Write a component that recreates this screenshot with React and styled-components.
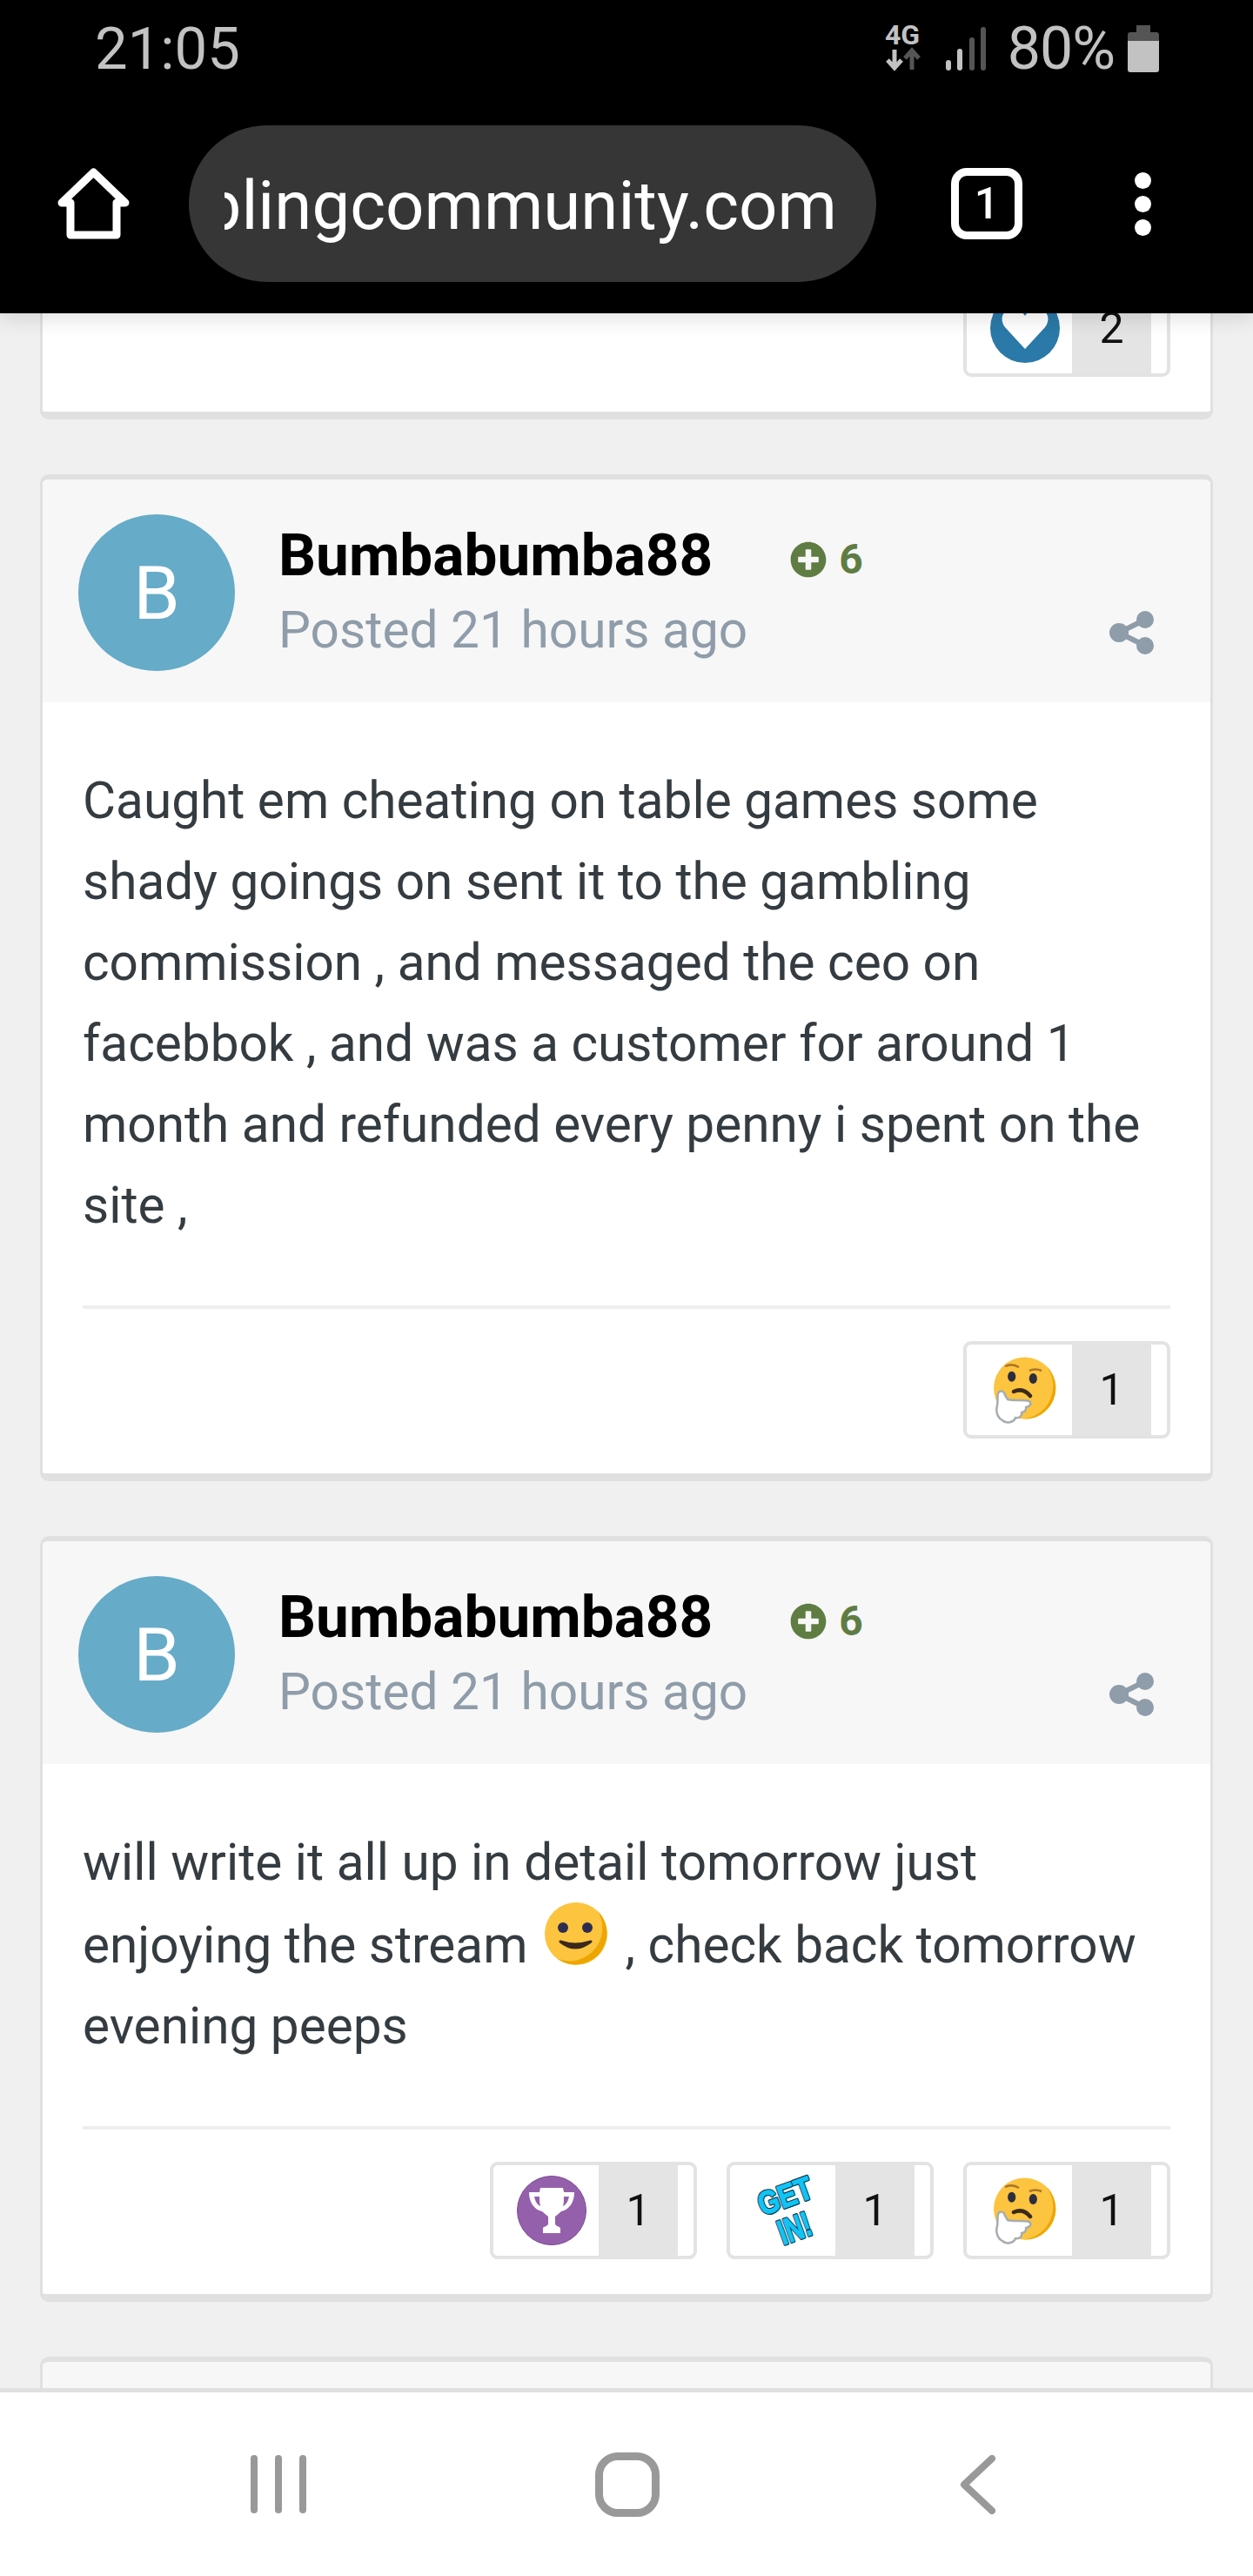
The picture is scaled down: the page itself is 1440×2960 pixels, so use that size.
import React from 'react';
import styled, { createGlobalStyle } from 'styled-components';
import { FaPlusCircle } from 'react-icons/fa';

const GlobalStyle = createGlobalStyle`
html, body {
    margin: 0;
    padding: 0;
    background: #f0f0f0;
}
* { box-sizing: border-box; }
`

const Screen = styled.div`
width: 1440px;
height: 2960px;
display: flex;
flex-direction: column;
overflow: hidden;
background: #f0f0f0;
font-family: Roboto, "Liberation Sans", sans-serif;
`

// browser chrome
const TopBar = styled.header`
position: relative;
z-index: 2;
flex: none;
height: 360px;
background: #000;
box-shadow: 0 4px 24px rgba(0, 0, 0, 0.14);
`
const StatusRow = styled.div`
height: 111px;
display: flex;
align-items: center;
justify-content: space-between;
padding: 0 108px 0 109px;
color: #c2c2c2;
font-size: 67px;
`
const StatusIcons = styled.div`
display: flex;
align-items: center;
`
const NetworkIcon = styled.svg`
margin-right: 27px;
`
const SignalIcon = styled.svg`
margin-right: 22px;
`
const BatteryText = styled.span`
font-size: 68px;
letter-spacing: -1px;
margin-right: 15px;
`
const Toolbar = styled.div`
height: 249px;
display: flex;
align-items: flex-start;
padding: 33px 0 0 66px;
`
const ToolIcon = styled.svg`
flex: none;
display: block;
margin-top: ${p => p.$top || 0}px;
margin-left: ${p => p.$left || 0}px;
`
const UrlPill = styled.div`
width: 790px;
height: 180px;
margin-left: 68px;
border-radius: 90px;
background: #363636;
display: flex;
align-items: center;
padding: 0 45px 0 41px;
`
const UrlClip = styled.div`
width: 100%;
overflow: hidden;
display: flex;
justify-content: flex-end;
`
const UrlText = styled.span`
flex: none;
color: #fff;
font-size: 78px;
line-height: 116px;
padding-top: 6px;
white-space: nowrap;
`
const TabCount = styled.div`
flex: none;
width: 82px;
height: 82px;
margin: 49px 0 0 86px;
border: 9px solid #fff;
border-radius: 18px;
color: #fff;
font-size: 50px;
font-weight: 500;
display: flex;
align-items: center;
justify-content: center;
`
const MenuDots = styled.div`
flex: none;
margin: 54px 0 0 129px;
display: flex;
flex-direction: column;
gap: 8px;
`
const MenuDot = styled.i`
display: block;
width: 19px;
height: 19px;
border-radius: 50%;
background: #fff;
`

// forum feed
const Feed = styled.main`
flex: 1;
min-height: 0;
overflow: hidden;
display: flex;
flex-direction: column;
gap: 63px;
padding: 0 46px;
`
const Card = styled.article`
flex: none;
background: #fff;
border-style: solid;
border-color: #e0e0e0;
border-width: 6px 3px 9px;
border-radius: 10px;
`
const TailCard = styled(Card)`
height: 122px;
border-top: 0;
border-radius: 0 0 10px 10px;
overflow: hidden;
display: flex;
align-items: flex-end;
justify-content: flex-end;
padding: 0 46px 40px 0;
`
const StubCard = styled(Card)`
height: 300px;
background: #f7f7f7;
`
const CardHeader = styled.div`
height: 256px;
background: #f7f7f7;
display: flex;
padding: 40px 64px 0 41px;
border-radius: 7px 7px 0 0;
`
const Avatar = styled.div`
flex: none;
width: 180px;
height: 180px;
border-radius: 50%;
background: #66abc8;
color: #fff;
font-size: 86px;
display: flex;
align-items: center;
justify-content: center;
`
const AuthorInfo = styled.div`
flex: 1;
margin: 4px 0 0 50px;
`
const NameRow = styled.div`
display: flex;
align-items: center;
height: 85px;
`
const Name = styled.span`
font-size: 67.5px;
font-weight: 700;
color: #000;
`
const Rep = styled.span`
display: flex;
align-items: center;
gap: 14px;
margin: 10px 0 0 89px;
color: #5f7d43;
font-size: 48px;
font-weight: 700;
`
const MetaRow = styled.div`
display: flex;
align-items: center;
justify-content: space-between;
height: 85px;
color: #8f9ca9;
`
const Posted = styled.span`
font-size: 58.6px;
padding-top: 2px;
`
const ShareIcon = styled.svg`
flex: none;
margin-top: 8px;
`
const CardBody = styled.div`
padding: 67px 46px 40px 46px;
`
const PostText = styled.p`
margin: 0 0 68px;
font-size: 58.5px;
line-height: 93px;
color: #353c41;
`
const InlineEmoji = styled.svg`
width: 74px;
height: 74px;
vertical-align: -4px;
margin: -2px 5px 0 4px;
`
const ReactionRow = styled.div`
display: flex;
justify-content: flex-end;
gap: 34px;
border-top: 4px solid #eeeeee;
padding-top: 37px;
`
const Pill = styled.div`
flex: none;
width: 238px;
height: 112px;
display: flex;
background: #fff;
border: 4px solid #e3e3e3;
border-radius: 9px;
`
const PillIcon = styled.div`
width: 121px;
padding-left: 13px;
display: flex;
align-items: center;
justify-content: center;
`
const PillCount = styled.div`
width: 91px;
background: #e4e4e4;
color: #111;
font-size: 50px;
display: flex;
align-items: center;
justify-content: center;
`

// phone nav
const NavBar = styled.nav`
position: relative;
z-index: 2;
flex: none;
height: 216px;
background: #fff;
border-top: 5px solid #e0e0e0;
padding: 69px 0 0 288px;
display: flex;
align-items: flex-start;
`
const NavLines = styled.div`
width: 64px;
height: 67px;
margin-top: 3px;
display: flex;
justify-content: space-between;
`
const NavLine = styled.i`
display: block;
width: 8px;
height: 100%;
border-radius: 4px;
background: #999;
`
const NavHome = styled.div`
width: 74px;
height: 74px;
margin-left: 332px;
border: 9px solid #999;
border-radius: 26px;
`

const HeartIcon = () => (
    <svg width="80" height="80" viewBox="0 0 80 80">
        <circle cx="40" cy="40" r="40" fill="#2a79a8" />
        <path d="M40 64 L17 39 C10 30 14 18 26 18 C32 18 37 21 40 26 C43 21 48 18 54 18 C66 18 70 30 63 39 Z" fill="#fff" />
    </svg>
);

const ThinkIcon = () => (
    <svg width="80" height="80" viewBox="0 0 80 80">
        <circle cx="39.5" cy="38" r="35.5" fill="#fcc43f" />
        <path d="M64 12 A35.5 35.5 0 0 1 38 73.5 A38 38 0 0 0 64 12 Z" fill="#eda600" />
        <path d="M17 13 Q25 9 33 14" fill="none" stroke="#a8742a" strokeWidth="2.5" />
        <path d="M45 18 Q52 15 59 18" fill="none" stroke="#a8742a" strokeWidth="2.5" />
        <ellipse cx="24.7" cy="24.7" rx="4.6" ry="6" fill="#2d2d3f" />
        <ellipse cx="49.3" cy="27" rx="4.6" ry="6" fill="#2d2d3f" />
        <path d="M27 42 Q38 37 46 47" fill="none" stroke="#3a2a1c" strokeWidth="4.5" strokeLinecap="round" />
        <path d="M9 44 C11 40 16 41 17 46 L20 51 C28 53 38 51 45 53 C48 56 46 59 41 60 C42 63 39 66 36 66 C37 70 33 73 29 72 C27 78 18 79 14 75 C8 72 6 64 8 58 C9 53 8 48 9 44 Z" fill="#fff" stroke="#a6adb1" strokeWidth="2.5" strokeLinejoin="round" />
    </svg>
);

const TrophyIcon = () => (
    <svg width="80" height="80" viewBox="0 0 80 80">
        <circle cx="40" cy="40" r="39.5" fill="#9560ab" stroke="#7b4a91" strokeWidth="1" />
        <path d="M27 14 H53 L54 19 H66 C66 31 60 39 51 41 C48 44 45 46 44 47 V55 C44 58 48 58 50 60 V66 H30 V60 C32 58 36 58 36 55 V47 C35 46 32 44 29 41 C20 39 14 31 14 19 H26 Z M20 24 C21 29 23 33 27 35 C26 32 26 28 26 24 Z M60 24 H54 C54 28 54 32 53 35 C57 33 59 29 60 24 Z" fill="#fff" fillRule="evenodd" />
    </svg>
);

// sticker: same letters drawn twice through <use>, dark outline under a cyan stroke
const GetInIcon = () => (
    <svg width="84" height="84" viewBox="0 0 84 84">
        <defs>
            <g id="getin-letters" fontFamily="'Liberation Sans', sans-serif" fontWeight="700" textAnchor="middle" strokeLinejoin="round" strokeLinecap="round">
                <text transform="translate(38 25) rotate(-20)" y="13" fontSize="37" textLength="64" lengthAdjust="spacingAndGlyphs">GET</text>
                <text transform="translate(49 62) rotate(-20)" y="14" fontSize="40" textLength="38" lengthAdjust="spacingAndGlyphs">IN!</text>
            </g>
        </defs>
        <use href="#getin-letters" fill="#0a3c52" stroke="#0a3c52" strokeWidth="3.6" />
        <use href="#getin-letters" fill="#12c4f4" stroke="#12c4f4" strokeWidth="1.2" />
    </svg>
);

const Reaction = ({ icon, count }) => (
    <Pill>
        <PillIcon>{icon}</PillIcon>
        <PillCount>{count}</PillCount>
    </Pill>
);

const Post = ({ children, reactions }) => (
    <Card>
        <CardHeader>
            <Avatar>B</Avatar>
            <AuthorInfo>
                <NameRow>
                    <Name>Bumbabumba88</Name>
                    <Rep><FaPlusCircle size={42} />6</Rep>
                </NameRow>
                <MetaRow>
                    <Posted>Posted 21 hours ago</Posted>
                    <ShareIcon width="52" height="50" viewBox="0 0 52 50">
                        <path d="M11 25 L41 10 M11 25 L41 40" stroke="currentColor" strokeWidth="6" fill="none" />
                        <circle cx="11" cy="25" r="11" fill="currentColor" />
                        <circle cx="41" cy="10" r="10" fill="currentColor" />
                        <circle cx="41" cy="40" r="10" fill="currentColor" />
                    </ShareIcon>
                </MetaRow>
            </AuthorInfo>
        </CardHeader>
        <CardBody>
            <PostText>{children}</PostText>
            <ReactionRow>{reactions}</ReactionRow>
        </CardBody>
    </Card>
);

const App = () => {
    return <Screen>
        <GlobalStyle />
        <TopBar>
            <StatusRow>
                <span>21:05</span>
                <StatusIcons>
                    <NetworkIcon width="44" height="58" viewBox="0 0 44 58">
                        <text x="22" y="24" textAnchor="middle" fill="#c2c2c2" fontSize="32" fontWeight="700" fontFamily="Roboto, sans-serif">4G</text>
                        <path d="M13 30 V50 M5 42 L13 51 L21 42" fill="none" stroke="#c2c2c2" strokeWidth="5" />
                        <path d="M33 53 V33 M25 40 L33 31 L41 40" fill="none" stroke="#555" strokeWidth="5" />
                    </NetworkIcon>
                    <SignalIcon width="50" height="54" viewBox="0 0 50 54">
                        <rect x="1" y="40" width="6" height="12" rx="3" fill="#c2c2c2" />
                        <rect x="14" y="27" width="6" height="25" rx="3" fill="#c2c2c2" />
                        <rect x="28" y="14" width="6" height="38" rx="3" fill="#555" />
                        <rect x="41" y="2" width="6" height="50" rx="3" fill="#555" />
                    </SignalIcon>
                    <BatteryText>80%</BatteryText>
                    <svg width="36" height="54" viewBox="0 0 36 54">
                        <path d="M10 0 H26 V8 H33 A3 3 0 0 1 36 11 V18 H0 V11 A3 3 0 0 1 3 8 H10 Z" fill="#555" />
                        <path d="M0 18 H36 V51 A3 3 0 0 1 33 54 H3 A3 3 0 0 1 0 51 Z" fill="#c2c2c2" />
                    </svg>
                </StatusIcons>
            </StatusRow>
            <Toolbar>
                <ToolIcon $top={49} width="83" height="82" viewBox="0 0 83 82">
                    <path d="M41.5 5 L78 40 H68 V77 H15 V40 H5 Z" fill="none" stroke="#fff" strokeWidth="9" strokeLinejoin="round" />
                </ToolIcon>
                <UrlPill>
                    <UrlClip>
                        <UrlText>gamblingcommunity.com</UrlText>
                    </UrlClip>
                </UrlPill>
                <TabCount>1</TabCount>
                <MenuDots>
                    <MenuDot />
                    <MenuDot />
                    <MenuDot />
                </MenuDots>
            </Toolbar>
        </TopBar>
        <Feed>
            <TailCard>
                <Reaction icon={<HeartIcon />} count="2" />
            </TailCard>
            <Post reactions={<Reaction icon={<ThinkIcon />} count="1" />}>
                Caught em cheating on table games some shady goings on sent it to the gambling commission , and messaged the ceo on facebbok , and was a customer for around 1 month and refunded every penny i spent on the site ,
            </Post>
            <Post reactions={<>
                <Reaction icon={<TrophyIcon />} count="1" />
                <Reaction icon={<GetInIcon />} count="1" />
                <Reaction icon={<ThinkIcon />} count="1" />
            </>}>
                will write it all up in detail tomorrow just enjoying the stream{' '}
                <InlineEmoji viewBox="0 0 74 74">
                    <circle cx="37" cy="37" r="36" fill="#fcc43f" />
                    <path d="M62 11 A36 36 0 0 1 16 66 A38 38 0 0 0 62 11 Z" fill="#eda600" />
                    <circle cx="22" cy="30" r="6" fill="#2d2d4f" />
                    <circle cx="50" cy="30" r="6" fill="#2d2d4f" />
                    <path d="M19 46 Q36 60 54 46 Q36 52 19 46 Z" fill="#3a2a1c" stroke="#3a2a1c" strokeWidth="3" strokeLinejoin="round" />
                </InlineEmoji>
                {' '}, check back tomorrow evening peeps
            </Post>
            <StubCard />
        </Feed>
        <NavBar>
            <NavLines>
                <NavLine />
                <NavLine />
                <NavLine />
            </NavLines>
            <NavHome />
            <ToolIcon $left={344} $top={3} width="44" height="68" viewBox="0 0 44 68">
                <path d="M38 4 L6 34 L38 64" fill="none" stroke="#999" strokeWidth="8" strokeLinecap="round" strokeLinejoin="round" />
            </ToolIcon>
        </NavBar>
    </Screen>;
};

export default App;
